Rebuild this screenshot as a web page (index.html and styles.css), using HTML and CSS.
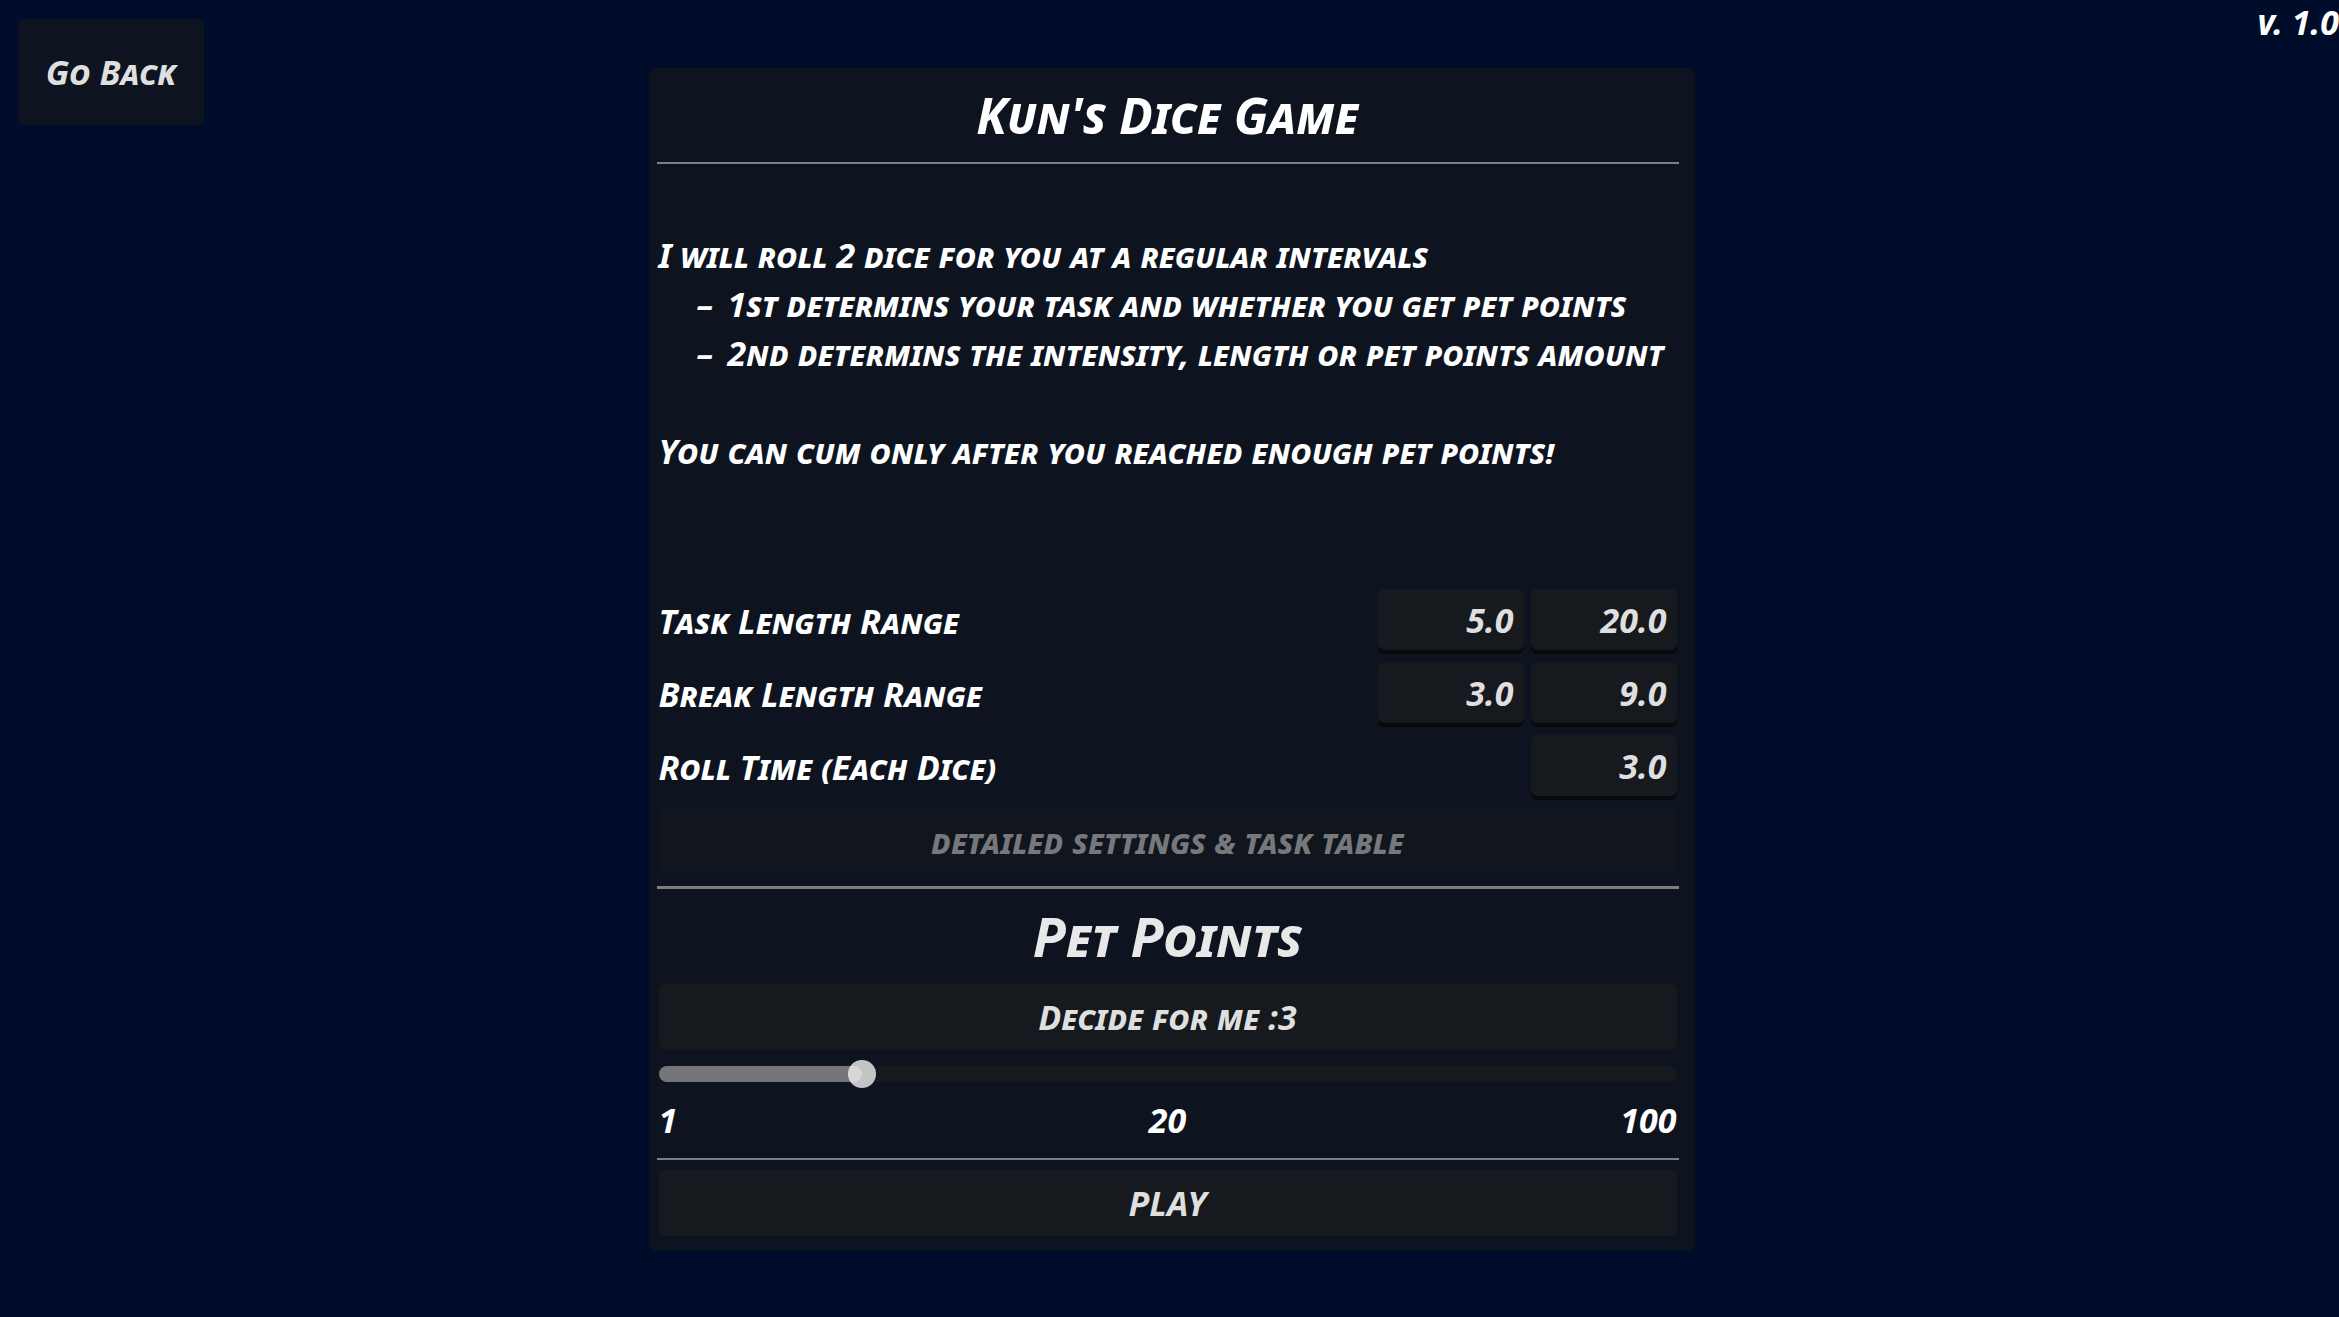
FILE: index.html
```html
<!DOCTYPE html>
<html lang="en">
  <head>
    <meta charset="UTF-8" />
    <meta name="viewport" content="width=device-width, initial-scale=1.0" />
    <title>Kun's Dice Game</title>
    <link rel="stylesheet" href="styles.css">
  </head>
  <body>
    <header class="topbar">
      <button type="button" class="back">Go Back</button>
      <span class="version">v. 1.0</span>
    </header>

    <main class="panel">
      <h1>Kun's Dice Game</h1>
      <hr />

      <div class="rules">
        <p>I will roll 2 dice for you at a regular intervals</p>
        <ul>
          <li>1st determins your task and whether you get pet points</li>
          <li>2nd determins the intensity, length or pet points amount</li>
        </ul>
        <p>You can cum only after you reached enough pet points!</p>
      </div>

      <form class="settings">
        <div class="row">
          <label for="taskMin">Task Length Range</label>
          <input type="text" id="taskMin" value="5.0" />
          <input type="text" id="taskMax" value="20.0" aria-label="Task length maximum" />
        </div>
        <div class="row">
          <label for="breakMin">Break Length Range</label>
          <input type="text" id="breakMin" value="3.0" />
          <input type="text" id="breakMax" value="9.0" aria-label="Break length maximum" />
        </div>
        <div class="row">
          <label for="rollTime">Roll Time (Each Dice)</label>
          <input type="text" id="rollTime" value="3.0" />
        </div>
        <button type="button" class="wide" disabled>detailed settings &amp; task table</button>
      </form>
      <hr class="thick" />

      <section class="points">
        <h2><label for="points">Pet Points</label></h2>
        <button type="button" class="wide">Decide for me :3</button>
        <div class="slider">
          <div class="fill" style="width: 20%"></div>
          <input type="range" id="points" min="0" max="100" value="20" />
        </div>
        <div class="scale">
          <span>1</span>
          <output for="points">20</output>
          <span>100</span>
        </div>
      </section>
      <hr />

      <div class="actions">
        <button type="button" class="wide">PLAY</button>
      </div>
    </main>
  </body>
</html>
```

FILE: styles.css
```css
* {
  box-sizing: border-box;
}
body {
  margin: 0;
  padding-left: 4px;
  background: #000d2a;
  color: #fff;
  font: italic bold 34px/49px "Noto Sans", sans-serif;
  font-variant: small-caps;
}
button,
input {
  font: inherit;
  color: #dfdfdf;
  border: none;
  border-radius: 6px;
  background: #16191d;
}
h1,
h2,
p,
ul {
  margin: 0;
  padding: 0;
  font-weight: bold;
}
.topbar {
  display: flex;
  justify-content: space-between;
  align-items: flex-start;
  height: 68px;
}
.back {
  width: 186px;
  height: 106px;
  margin: 19px 0 0 14px;
  padding: 0;
  background: #0e141f;
}
.version {
  line-height: 44px;
}
.panel {
  width: 1046px;
  max-width: 100%;
  margin: 0 auto;
  padding: 0 16px 14px 8px;
  border-radius: 6px;
  background: #0e141f;
}
hr {
  height: 2px;
  margin: 0;
  border: none;
  background: #7f7f7f;
}
hr.thick {
  height: 3px;
}
h1 {
  font-size: 50px;
  line-height: 94px;
  text-align: center;
}
.rules {
  padding: 67px 2px 113px;
}
.rules ul {
  margin-bottom: 49px;
  padding-left: 38px;
  list-style: none;
}
.rules li::before {
  content: "–";
  display: inline-block;
  width: 31px;
}
.settings {
  display: flex;
  flex-direction: column;
  gap: 8px;
  padding: 0 2px 12px;
}
.row {
  display: flex;
  gap: 7px;
}
.row label {
  flex: 1;
  line-height: 65px;
}
.row input {
  width: 146px;
  height: 65px;
  padding: 0 10px 4px;
  text-align: right;
  box-shadow: inset 0 -4px #07090d;
}
.wide {
  display: block;
  width: 100%;
  height: 66px;
  padding: 0;
}
.wide:disabled {
  color: #77787b;
  background: #11151d;
}
.points {
  padding: 0 2px 12px;
}
h2 {
  color: #e8e8e8;
  font-size: 54px;
  line-height: 95px;
  text-align: center;
}
.slider {
  position: relative;
  height: 16px;
  margin: 16px 0 12px;
  border-radius: 8px;
  background: #16191d;
}
.fill {
  height: 16px;
  border-radius: 8px;
  background: #757679;
}
/* runs past both ends so the thumb centre reaches the track edges */
.slider input {
  position: absolute;
  top: -6px;
  left: -14px;
  width: calc(100% + 28px);
  height: 28px;
  margin: 0;
  background: none;
  appearance: none;
}
.slider input::-webkit-slider-thumb {
  width: 28px;
  height: 28px;
  border-radius: 50%;
  background: rgba(240, 240, 240, 0.8);
  appearance: none;
}
.scale {
  display: grid;
  grid-template-columns: 1fr auto 1fr;
  line-height: 52px;
}
.scale span:last-child {
  text-align: right;
}
.actions {
  padding: 10px 2px 0;
}
```
